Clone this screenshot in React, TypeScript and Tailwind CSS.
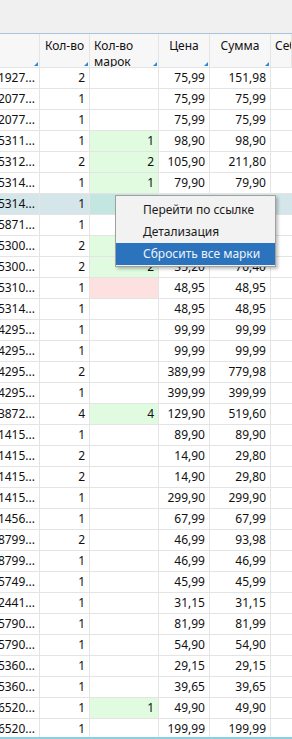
import React from 'react'

type Row = {
  id: string
  qty: string
  marks?: string
  mark?: 'green' | 'pink'
  price?: string
  sum?: string
  selected?: boolean
}

// строки 7-9 закрыты меню, значения справа не видны
const ROWS: Row[] = [
  { id: '4600001927...', qty: '2', price: '75,99', sum: '151,98' },
  { id: '4600002077...', qty: '1', price: '75,99', sum: '75,99' },
  { id: '4600002077...', qty: '1', price: '75,99', sum: '75,99' },
  { id: '4607025311...', qty: '1', marks: '1', mark: 'green', price: '98,90', sum: '98,90' },
  { id: '4607025312...', qty: '2', marks: '2', mark: 'green', price: '105,90', sum: '211,80' },
  { id: '4607025314...', qty: '1', marks: '1', mark: 'green', price: '79,90', sum: '79,90' },
  { id: '4607025314...', qty: '1', mark: 'green', selected: true },
  { id: '4600000005871...', qty: '1' },
  { id: '4607025300...', qty: '2', mark: 'green' },
  { id: '4607025300...', qty: '2', marks: '2', mark: 'green', price: '35,20', sum: '70,40' },
  { id: '4607025310...', qty: '1', mark: 'pink', price: '48,95', sum: '48,95' },
  { id: '4607025314...', qty: '1', price: '48,95', sum: '48,95' },
  { id: '4601054295...', qty: '1', price: '99,99', sum: '99,99' },
  { id: '4601054295...', qty: '1', price: '99,99', sum: '99,99' },
  { id: '4601054295...', qty: '2', price: '389,99', sum: '779,98' },
  { id: '4601054295...', qty: '1', price: '399,99', sum: '399,99' },
  { id: '4600073872...', qty: '4', marks: '4', mark: 'green', price: '129,90', sum: '519,60' },
  { id: '4600031415...', qty: '1', price: '89,90', sum: '89,90' },
  { id: '4600031415...', qty: '2', price: '14,90', sum: '29,80' },
  { id: '4600031415...', qty: '2', price: '14,90', sum: '29,80' },
  { id: '4600031415...', qty: '1', price: '299,90', sum: '299,90' },
  { id: '4600031456...', qty: '1', price: '67,99', sum: '67,99' },
  { id: '4600008799...', qty: '2', price: '46,99', sum: '93,98' },
  { id: '4600008799...', qty: '1', price: '46,99', sum: '46,99' },
  { id: '4600035749...', qty: '1', price: '45,99', sum: '45,99' },
  { id: '4600072441...', qty: '1', price: '31,15', sum: '31,15' },
  { id: '4600015790...', qty: '1', price: '81,99', sum: '81,99' },
  { id: '4600015790...', qty: '1', price: '54,90', sum: '54,90' },
  { id: '4600015360...', qty: '1', price: '29,15', sum: '29,15' },
  { id: '4600015360...', qty: '1', price: '39,65', sum: '39,65' },
  { id: '4600016520...', qty: '1', marks: '1', mark: 'green', price: '49,90', sum: '49,90' },
  { id: '4600016520...', qty: '1', price: '199,99', sum: '199,99' },
]

const COLS = 'grid grid-cols-[40px_50px_69px_51px_61px_1fr]'

// маленький синий уголок фильтра в заголовке
function Corner() {
  return (
    <svg width="4" height="4" viewBox="0 0 4 4" className="absolute right-[1px] bottom-[1px]">
      <polygon points="4,0 4,4 0,4" fill="#2f8ad0" />
    </svg>
  )
}

function HeadCell({ children, align = 'center', corner = true }: { children?: React.ReactNode; align?: 'center' | 'left'; corner?: boolean }) {
  return (
    <div
      className={`relative border-r border-[#e4e4e4] pt-[4px] leading-[16px] overflow-hidden whitespace-pre-line ${
        align === 'center' ? 'text-center' : 'text-left pl-[4px]'
      }`}
    >
      {children}
      {corner && <Corner />}
    </div>
  )
}

function Cell({ children, className = '' }: { children?: React.ReactNode; className?: string }) {
  return (
    <div className={`flex items-center justify-end pr-[4px] border-r border-[#e4e4e4] overflow-hidden whitespace-nowrap ${className}`}>
      {children}
    </div>
  )
}

export default function App() {
  return (
    <div className="relative w-[292px] h-[739px] overflow-hidden flex flex-col bg-white text-[12px] text-[#111] font-['Noto_Sans',sans-serif]">
      <div className="h-[34px] shrink-0 bg-[#f0f0f0] border-b border-[#a9c4da]" />

      <div className={`${COLS} h-[34px] shrink-0 bg-[#f7f7f7] border-b border-[#e4e4e4]`}>
        <HeadCell />
        <HeadCell>Кол-во</HeadCell>
        <HeadCell align="left">{'Кол-во\nмарок'}</HeadCell>
        <HeadCell>Цена</HeadCell>
        <HeadCell>Сумма</HeadCell>
        <HeadCell align="left" corner={false}>Себ</HeadCell>
      </div>

      <div className="flex-1 overflow-hidden border-b-2 border-[#8ccfe0]">
        {ROWS.map((r, i) => {
          let markBg = ''
          if (r.mark === 'green') markBg = r.selected ? 'bg-[#c3e6e0]' : 'bg-[#e0fbe0]'
          if (r.mark === 'pink') markBg = 'bg-[#fde0e0]'
          return (
            <div key={i} className={`${COLS} h-[21px] border-b border-[#e4e4e4] ${r.selected ? 'bg-[#d4e6ea]' : ''}`}>
              <Cell>{r.id}</Cell>
              <Cell>{r.qty}</Cell>
              <Cell className={markBg}>{r.marks}</Cell>
              <Cell>{r.price}</Cell>
              <Cell>{r.sum}</Cell>
              <div />
            </div>
          )
        })}
      </div>

      {/* контекстное меню */}
      <div className="absolute left-[115px] top-[195px] w-[161px] bg-[#f2f2f2] border border-[#a0a0a0] pt-[3px] pb-[1px] shadow-[2px_2px_3px_rgba(0,0,0,0.25)]">
        <div className="h-[22px] flex items-center pl-[27px] text-[#1a1a1a]">Перейти по ссылке</div>
        <div className="h-[22px] flex items-center pl-[27px] text-[#1a1a1a]">Детализация</div>
        <div className="h-[22px] flex items-center pl-[27px] bg-[#2b73bd] text-[#eef3fa]">Сбросить все марки</div>
      </div>
    </div>
  )
}
